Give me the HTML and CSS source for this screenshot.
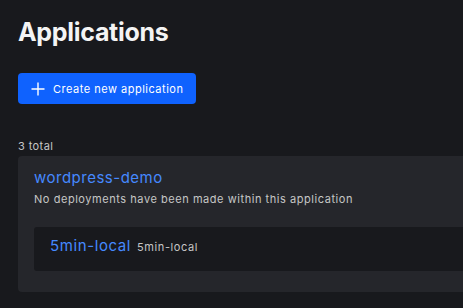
FILE: index.html
```html
<!DOCTYPE html>
<html lang="en">
<head>
    <meta charset="UTF-8">
    <meta name="viewport" content="width=device-width, initial-scale=1.0">
    <title>Applications</title>
    <link rel="stylesheet" href="styles.css">
</head>
<body>
    <main class="page">
        <h1 class="page-title">Applications</h1>

        <button class="create-btn">
            <svg class="create-icon" width="14" height="14" viewBox="0 0 14 14" aria-hidden="true">
                <path d="M7 0.5V13.5M0.5 7H13.5" stroke="currentColor" stroke-width="1.4" fill="none"/>
            </svg>
            <span>Create new application</span>
        </button>

        <p class="total">3 total</p>

        <section class="app-card">
            <h2 class="app-name">wordpress-demo</h2>
            <p class="app-note">No deployments have been made within this application</p>

            <div class="env-box">
                <span class="env-name">5min-local</span>
                <span class="env-id">5min-local</span>
            </div>
        </section>
    </main>
</body>
</html>
```

FILE: styles.css
```css
/* Base styles */
* {
    margin: 0;
    padding: 0;
    box-sizing: border-box;
}

:root {
    --bg: #18191d;
    --card: #25262b;
    --blue: #0f62fe;
    --link: #4589ff;
    --text: #f4f4f4;
    --muted: #c6c6c6;
}

body {
    font-family: 'Inter', 'Noto Sans', sans-serif;
    background-color: var(--bg);
    color: var(--text);
    overflow: hidden;
}

.page {
    padding: 16px 0 0 18px;
    width: 463px;
}

.page-title {
    font-size: 25px;
    font-weight: 700;
    line-height: 32px;
    letter-spacing: -0.3px;
}

/* Create button */
.create-btn {
    display: flex;
    align-items: center;
    gap: 8px;
    margin-top: 25px;
    height: 31px;
    padding: 0 13px;
    background: var(--blue);
    color: white;
    border: none;
    border-radius: 4px;
    font-family: inherit;
    font-size: 11px;
    letter-spacing: 0.5px;
    cursor: pointer;
}

.create-icon {
    display: block;
}

.total {
    margin-top: 34px;
    font-size: 11px;
    line-height: 16px;
    letter-spacing: 0.4px;
    color: var(--muted);
}

/* Application card */
.app-card {
    margin-top: 2px;
    background: var(--card);
    border-radius: 4px 0 0 4px;
    padding: 11px 0 21px 16px;
}

.app-name {
    font-size: 15px;
    font-weight: 400;
    line-height: 22px;
    letter-spacing: 0.5px;
    color: var(--link);
}

.app-note {
    margin-top: 2px;
    font-size: 11px;
    line-height: 16px;
    letter-spacing: 0.55px;
    color: var(--muted);
}

.env-box {
    display: flex;
    align-items: baseline;
    gap: 6px;
    margin-top: 20px;
    height: 44px;
    padding: 8px 0 0 16px;
    background: var(--bg);
    border-radius: 3px 0 0 3px;
}

.env-name {
    font-size: 15px;
    line-height: 22px;
    letter-spacing: 0.6px;
    color: var(--link);
}

.env-id {
    font-size: 11px;
    letter-spacing: 0.6px;
    color: var(--muted);
}
```
